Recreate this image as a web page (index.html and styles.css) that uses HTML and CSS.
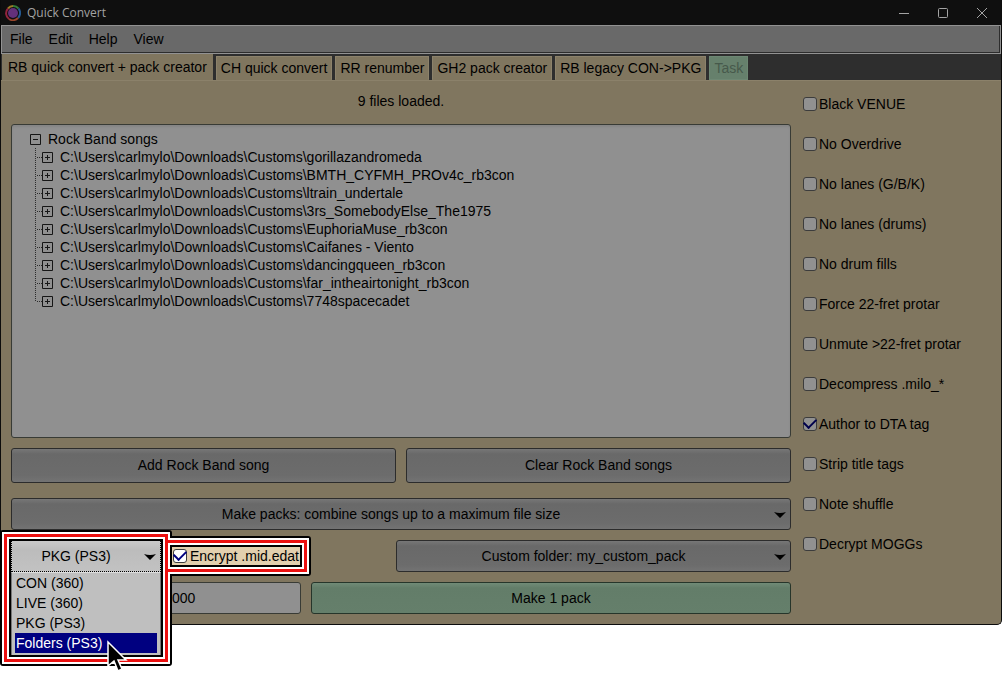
FILE: index.html
```html
<!DOCTYPE html>
<html lang="en">
<head>
<meta charset="utf-8">
<title>Quick Convert</title>
<link rel="stylesheet" href="styles.css">
</head>
<body>
<svg class="defs" aria-hidden="true">
  <symbol id="branch" viewBox="0 0 20 18">
    <path d="M1.5 0V18M3 9.5H8" stroke="#2c2c2c" stroke-dasharray="1 1" fill="none"/>
    <path d="M8.5 4.5h10v10h-10zM11 9.5h5M13.5 7v5" stroke="#161616" fill="none"/>
  </symbol>
  <symbol id="branch-end" viewBox="0 0 20 18">
    <path d="M1.5 0V10M3 9.5H8" stroke="#2c2c2c" stroke-dasharray="1 1" fill="none"/>
    <path d="M8.5 4.5h10v10h-10zM11 9.5h5M13.5 7v5" stroke="#161616" fill="none"/>
  </symbol>
  <symbol id="arrow" viewBox="0 0 12 6"><path d="M0 0Q6 2 12 0L6 6Z" fill="currentColor"/></symbol>
</svg>
<main class="window">
  <header class="titlebar">
    <svg class="logo" viewBox="0 0 16 16" fill="none" stroke-width="2" aria-hidden="true">
      <circle cx="8" cy="8" r="5" fill="#63307a"/>
      <path d="M3 3.5A7 7 0 0 1 8 1" stroke="#9b7c27"/>
      <path d="M8 1A7 7 0 0 1 13.5 3.5" stroke="#347b39"/>
      <path d="M13.5 3.5A7 7 0 0 1 13 13" stroke="#245890"/>
      <path d="M13 13A7 7 0 0 1 4 14" stroke="#98452a"/>
      <path d="M4 14A7 7 0 0 1 3 3.5" stroke="#94243d"/>
    </svg>
    <h1 class="title">Quick Convert</h1>
    <button class="winbtn" aria-label="Minimize"><svg viewBox="0 0 12 12"><path d="M1 6.5h10"/></svg></button>
    <button class="winbtn" aria-label="Maximize"><svg viewBox="0 0 12 12"><rect x="1.5" y="1.5" width="9" height="9" rx="1"/></svg></button>
    <button class="winbtn" aria-label="Close"><svg viewBox="0 0 12 12"><path d="M1 1l10 10M11 1L1 11"/></svg></button>
  </header>
  <nav class="menubar">
    <button>File</button><button>Edit</button><button>Help</button><button>View</button>
  </nav>
  <div class="tabs" role="tablist">
    <button class="tab active" role="tab" aria-selected="true">RB quick convert + pack creator</button>
    <button class="tab" role="tab">CH quick convert</button>
    <button class="tab" role="tab">RR renumber</button>
    <button class="tab" role="tab">GH2 pack creator</button>
    <button class="tab" role="tab">RB legacy CON-&gt;PKG</button>
    <button class="tab task" role="tab">Task</button>
  </div>
  <div class="content">
    <section class="left">
      <p class="status">9 files loaded.</p>
      <div class="tree">
        <div class="root"><svg class="collapse" viewBox="0 0 11 11"><path d="M.5.5h10v10H.5zM3 5.5h5" stroke="#161616" fill="none"/></svg>Rock Band songs</div>
        <ul class="files">
          <li><svg><use href="#branch"/></svg>C:\Users\carlmylo\Downloads\Customs\gorillazandromeda</li>
          <li><svg><use href="#branch"/></svg>C:\Users\carlmylo\Downloads\Customs\BMTH_CYFMH_PROv4c_rb3con</li>
          <li><svg><use href="#branch"/></svg>C:\Users\carlmylo\Downloads\Customs\ltrain_undertale</li>
          <li><svg><use href="#branch"/></svg>C:\Users\carlmylo\Downloads\Customs\3rs_SomebodyElse_The1975</li>
          <li><svg><use href="#branch"/></svg>C:\Users\carlmylo\Downloads\Customs\EuphoriaMuse_rb3con</li>
          <li><svg><use href="#branch"/></svg>C:\Users\carlmylo\Downloads\Customs\Caifanes - Viento</li>
          <li><svg><use href="#branch"/></svg>C:\Users\carlmylo\Downloads\Customs\dancingqueen_rb3con</li>
          <li><svg><use href="#branch"/></svg>C:\Users\carlmylo\Downloads\Customs\far_intheairtonight_rb3con</li>
          <li><svg><use href="#branch-end"/></svg>C:\Users\carlmylo\Downloads\Customs\7748spacecadet</li>
        </ul>
      </div>
      <div class="row songs">
        <button class="btn">Add Rock Band song</button>
        <button class="btn">Clear Rock Band songs</button>
      </div>
      <div class="drop">
        <select class="btn" aria-label="Pack mode"><option>Make packs: combine songs up to a maximum file size</option></select>
        <svg class="caret"><use href="#arrow"/></svg>
      </div>
      <div class="row output">
        <div class="drop format">
          <select class="btn lit" aria-label="Output format"><option>PKG (PS3)</option></select>
          <svg class="caret"><use href="#arrow"/></svg>
          <ul class="popup" role="listbox" aria-label="Output format">
            <li role="option">CON (360)</li>
            <li role="option">LIVE (360)</li>
            <li role="option">PKG (PS3)</li>
            <li role="option" class="chosen" aria-selected="true">Folders (PS3)</li>
          </ul>
          <svg class="rings" viewBox="0 0 312 138" fill="none" aria-hidden="true">
            <g stroke="#000" stroke-width="2"><rect x="2" y="2" width="170" height="134" rx="2"/><rect x="163" y="8" width="148" height="38" rx="2"/></g>
            <g stroke="#fff" stroke-width="2"><rect x="4" y="4" width="166" height="130"/><rect x="165" y="10" width="144" height="34"/></g>
            <g stroke="#ec1010" stroke-width="3"><rect x="6.5" y="6.5" width="161" height="125"/><rect x="167.5" y="12.5" width="139" height="29"/></g>
            <g stroke="#fff" stroke-width="2"><rect x="9" y="9" width="156" height="120"/><rect x="170" y="15" width="134" height="24"/></g>
            <g stroke="#000" stroke-width="2"><rect x="11" y="11" width="152" height="116"/><rect x="172" y="17" width="130" height="20"/></g>
          </svg>
          <svg class="cursor" viewBox="0 0 22 34" aria-hidden="true"><path d="M2 2V26L8 21L12 31L16 29L12 20H20Z" fill="#000" stroke="#fff" stroke-width="1.5"/></svg>
        </div>
        <label class="check lit-check"><input type="checkbox" checked>Encrypt .mid.edat</label>
        <div class="drop folder">
          <select class="btn" aria-label="Custom folder"><option>Custom folder: my_custom_pack</option></select>
          <svg class="caret"><use href="#arrow"/></svg>
        </div>
      </div>
      <div class="row make">
        <input class="size" type="text" aria-label="Maximum size" value="000">
        <button class="btn go">Make 1 pack</button>
      </div>
    </section>
    <aside class="options">
      <label class="check"><input type="checkbox">Black VENUE</label>
      <label class="check"><input type="checkbox">No Overdrive</label>
      <label class="check"><input type="checkbox">No lanes (G/B/K)</label>
      <label class="check"><input type="checkbox">No lanes (drums)</label>
      <label class="check"><input type="checkbox">No drum fills</label>
      <label class="check"><input type="checkbox">Force 22-fret protar</label>
      <label class="check"><input type="checkbox">Unmute &gt;22-fret protar</label>
      <label class="check"><input type="checkbox">Decompress .milo_*</label>
      <label class="check"><input type="checkbox" checked>Author to DTA tag</label>
      <label class="check"><input type="checkbox">Strip title tags</label>
      <label class="check"><input type="checkbox">Note shuffle</label>
      <label class="check"><input type="checkbox">Decrypt MOGGs</label>
    </aside>
  </div>
</main>
</body>
</html>
```
FILE: styles.css
```css
* { box-sizing: border-box; }
html { min-height: 100vh; background: #fff; }
body { margin: 0; min-height: 100vh; color: #000; font: 14px/18px "Liberation Sans", Arial, sans-serif; }
button, input, select { font: inherit; color: inherit; }
button { padding: 0; border: 0; background: none; }
ul { margin: 0; padding: 0; list-style: none; }
.defs { position: absolute; width: 0; height: 0; }

.window { background: #19160f; border: solid #0c0c0c; border-width: 0 1px 1px; border-radius: 0 0 5px 5px; }
.titlebar { display: flex; align-items: center; height: 25px; padding-left: 4px; background: #0f0f0f; }
.logo { width: 16px; height: 16px; margin-right: 6px; }
.title { flex: 1; margin: 0; font: 12px/18px "Open Sans", "Noto Sans", sans-serif; color: #a3a3a3; }
.winbtn { display: flex; justify-content: center; width: 39px; }
.winbtn svg { width: 12px; height: 12px; fill: none; stroke: #a3a3a3; }

.menubar { display: flex; gap: 16px; height: 29px; padding: 0 0 2px 8px; background: #696969; border: 1px solid #929292; box-shadow: inset -1px -1px #2d2d2d; }
.tabs { display: flex; align-items: flex-end; gap: 3px; height: 26px; padding-left: 1px; background: #2e2e2e; }
.tab { height: 24px; padding: 0 4px; background: #80765f; border: 1px solid #8c826b; border-bottom-color: #80765f; white-space: nowrap; }
.tab.active { height: 26px; padding: 0 5px; border-color: #80765f; }
.tab.task { background: #66806c; border-color: #6d8773; color: #46594b; }

.content { display: flex; gap: 12px; padding: 0 10px 10px; background: #80765f; border-top: 1px solid #8b816a; border-radius: 0 0 4px 4px; }
.left { flex: 1; min-width: 0; }
.status { margin: 0; padding: 11px 0 14px; text-align: center; }
.tree { min-height: 314px; padding: 5px 18px; background: #909090; border: 1px solid #383b35; border-radius: 3px; box-shadow: inset 0 2px 2px #868686; }
.root { display: flex; align-items: center; gap: 7px; }
.collapse { width: 11px; height: 11px; }
.files { padding-left: 4px; }
.files li { display: flex; gap: 6px; height: 18px; white-space: nowrap; }
.files svg { width: 20px; height: 18px; }

.row { display: flex; gap: 10px; margin-top: 10px; }
.songs { margin-bottom: 15px; }
.btn { flex: 1; width: 100%; height: 32px; background: linear-gradient(#777 0, #696969 5px, #6c6c6c 80%, #737373); border: 1px solid #2c2c2c; border-radius: 3px; }
.songs .btn { height: 35px; padding-bottom: 1px; }
.drop { position: relative; }
select.btn { display: block; appearance: none; padding: 0 20px 0 0; text-align: center; text-align-last: center; }
.caret { position: absolute; right: 5px; top: 14px; width: 12px; height: 6px; }
.output { align-items: center; gap: 11px; }
.format { width: 150px; height: 32px; }
.btn.lit { background: linear-gradient(#c9c9c9, #bcbcbc 30%, #c2c2c2); border: 1px dotted #000; border-radius: 0; }
.popup { position: absolute; z-index: 2; top: 32px; left: 0; width: 150px; padding: 0 3px 2px; background: #bfbfbf; border: 1px solid #777; border-top-color: #ddd; }
.popup li { height: 20px; padding-left: 1px; line-height: 20px; }
.popup .chosen { background: #000080; color: #fff; }
.rings { position: absolute; z-index: 3; top: -11px; left: -12px; width: 312px; height: 138px; pointer-events: none; }
.cursor { position: absolute; z-index: 4; top: 100px; left: 95px; width: 22px; height: 34px; pointer-events: none; }
.folder { width: 395px; margin-left: auto; }

.check { display: flex; align-items: center; gap: 2px; white-space: nowrap; }
.check input { appearance: none; width: 14px; height: 14px; margin: 0; background: #919191; border: 1px solid #3c3c3c; border-radius: 3px; }
.check input:checked { display: grid; place-items: center; }
.check input:checked::before { content: ""; width: 10px; height: 6px; margin-bottom: 4px; border: solid #00004c; border-width: 0 0 2px 2px; transform: rotate(-45deg); }
.lit-check { height: 18px; gap: 3px; padding: 0 1px; background: #e2cfae; }
.lit-check input { background: #fff; }
.lit-check input:checked::before { border-color: #000080; }
.size { width: 290px; height: 32px; padding: 0 8px 0 160px; background: #909090; border: 1px solid #383b35; border-radius: 3px; }
.go { background: linear-gradient(#718b77, #637d69 5px, #657f6b); border-color: #26352a; }
.options { width: 188px; padding-top: 3px; }
.options .check { height: 40px; }
```
